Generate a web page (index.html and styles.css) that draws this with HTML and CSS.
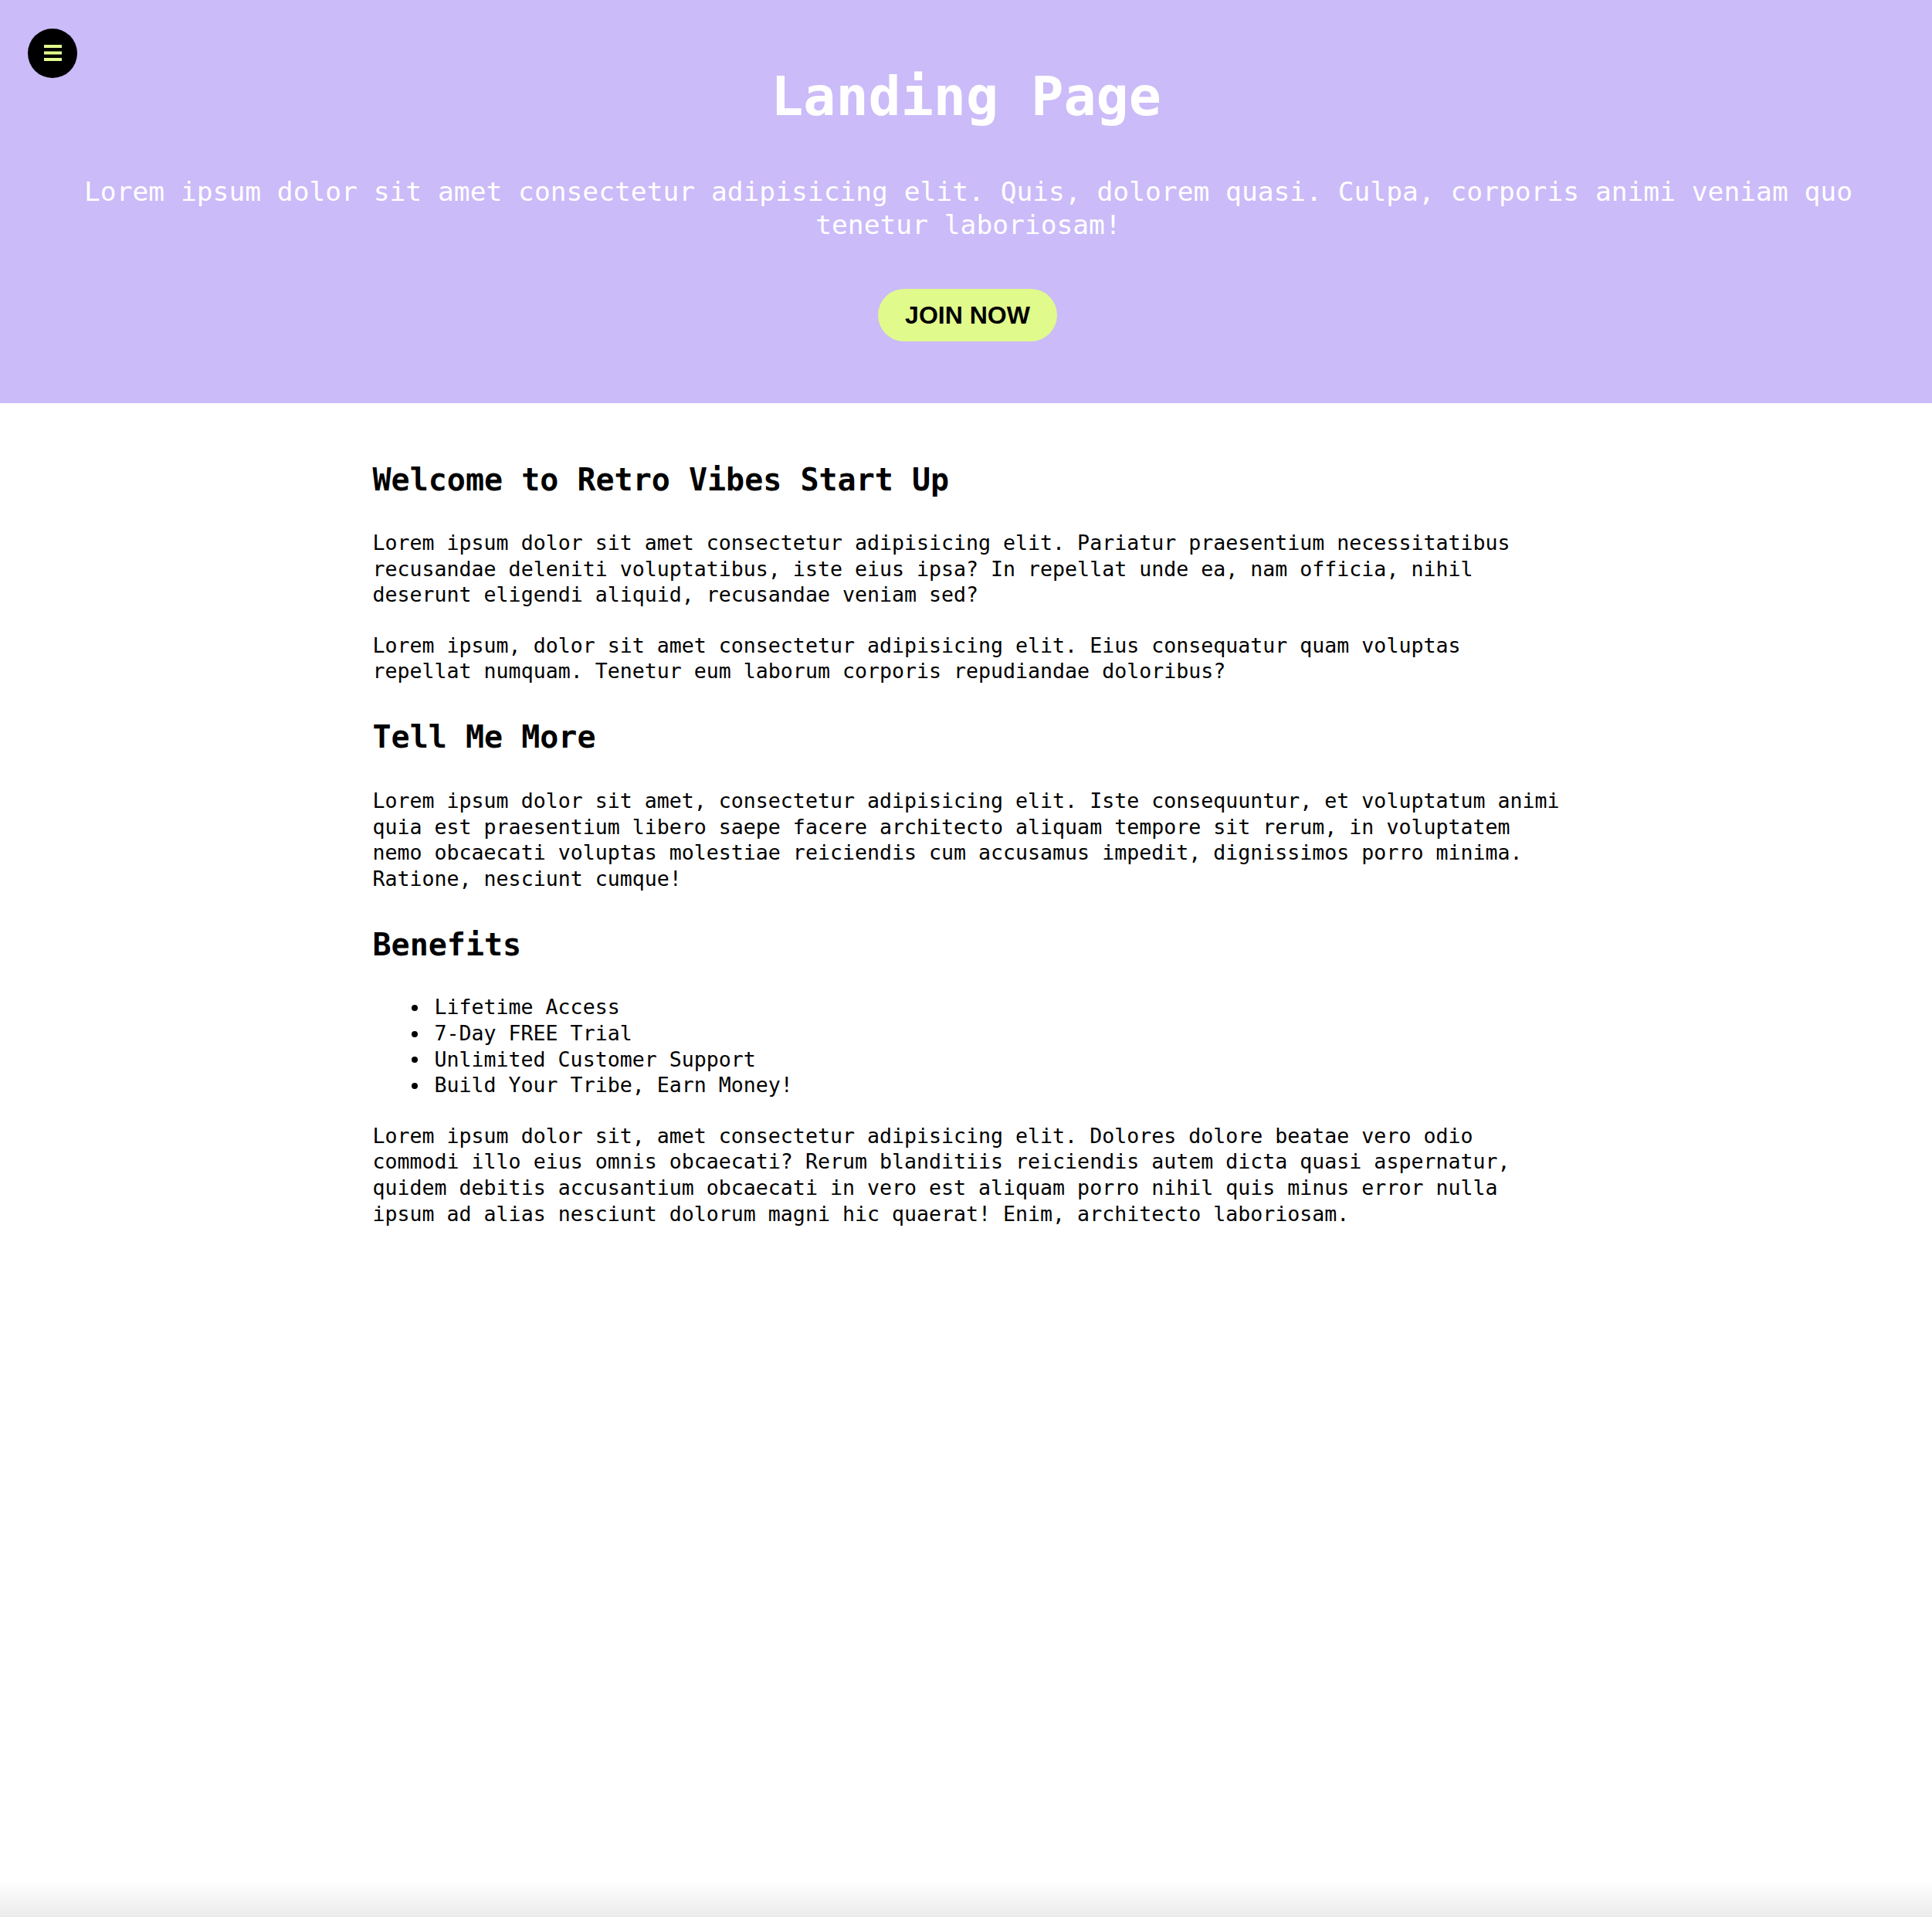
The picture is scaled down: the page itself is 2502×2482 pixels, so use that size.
FILE: index.html
```html
<!DOCTYPE html>
<html lang="en">
<head>
<meta charset="utf-8">
<title>Landing Page</title>
<link rel="stylesheet" href="styles.css">
</head>
<body>
<button class="menu-btn" aria-label="Menu">
  <svg class="menu-icon" viewBox="0 0 23 21" width="23" height="21" aria-hidden="true">
    <rect x="0" y="0" width="23" height="4" fill="#e1fa8c"/>
    <rect x="0" y="8.5" width="23" height="4" fill="#e1fa8c"/>
    <rect x="0" y="17" width="23" height="4" fill="#e1fa8c"/>
  </svg>
</button>

<header class="hero">
  <h1 class="hero-title">Landing Page</h1>
  <p class="hero-sub">Lorem ipsum dolor sit amet consectetur adipisicing elit. Quis, dolorem quasi. Culpa, corporis animi veniam quo tenetur laboriosam!</p>
  <div class="hero-cta"><a class="btn" href="#">JOIN NOW</a></div>
</header>

<main class="content">
  <h2 class="section-title">Welcome to Retro Vibes Start Up</h2>
  <p class="text">Lorem ipsum dolor sit amet consectetur adipisicing elit. Pariatur praesentium necessitatibus recusandae deleniti voluptatibus, iste eius ipsa? In repellat unde ea, nam officia, nihil deserunt eligendi aliquid, recusandae veniam sed?</p>
  <p class="text">Lorem ipsum, dolor sit amet consectetur adipisicing elit. Eius consequatur quam voluptas repellat numquam. Tenetur eum laborum corporis repudiandae doloribus?</p>

  <h2 class="section-title">Tell Me More</h2>
  <p class="text">Lorem ipsum dolor sit amet, consectetur adipisicing elit. Iste consequuntur, et voluptatum animi quia est praesentium libero saepe facere architecto aliquam tempore sit rerum, in voluptatem nemo obcaecati voluptas molestiae reiciendis cum accusamus impedit, dignissimos porro minima. Ratione, nesciunt cumque!</p>

  <h2 class="section-title section-title--list">Benefits</h2>
  <ul class="benefits">
    <li>Lifetime Access</li>
    <li>7-Day FREE Trial</li>
    <li>Unlimited Customer Support</li>
    <li>Build Your Tribe, Earn Money!</li>
  </ul>
  <p class="text">Lorem ipsum dolor sit, amet consectetur adipisicing elit. Dolores dolore beatae vero odio commodi illo eius omnis obcaecati? Rerum blanditiis reiciendis autem dicta quasi aspernatur, quidem debitis accusantium obcaecati in vero est aliquam porro nihil quis minus error nulla ipsum ad alias nesciunt dolorum magni hic quaerat! Enim, architecto laboriosam.</p>
</main>

<div class="bottom-fade" aria-hidden="true"></div>
</body>
</html>
```

FILE: styles.css
```css
html, body {
  margin: 0;
  padding: 0;
  background: #ffffff;
}

body {
  font-family: "DejaVu Sans Mono", "Liberation Mono", monospace;
  font-size: 26.6px;
  line-height: 33.6px;
  color: #000000;
  min-height: 100vh;
}

/* Floating menu button */
.menu-btn {
  position: absolute;
  left: 36px;
  top: 37px;
  width: 64px;
  height: 64px;
  border-radius: 50%;
  background: #000000;
  border: 0;
  padding: 0;
  display: flex;
  align-items: center;
  justify-content: center;
  cursor: pointer;
}

.menu-icon {
  display: block;
  margin-top: -1px;
}

/* Hero */
.hero {
  background: #cbbbf8;
  text-align: center;
  padding: 83px 60px 80px;
  color: #ffffff;
}

.hero-title {
  margin: 0;
  font-size: 70px;
  line-height: 84px;
  font-weight: bold;
  color: #ffffff;
}

.hero-sub {
  margin: 59.5px 0 0;
  padding-left: 6px;
  font-size: 34.6px;
  line-height: 43px;
  color: #ffffff;
}

.hero-cta {
  display: flex;
  justify-content: center;
  margin-top: 61.5px;
  padding-left: 4px;
}

.btn {
  display: block;
  height: 68px;
  padding: 0 35px;
  border-radius: 34px;
  background: #e1fa8c;
  color: #000000;
  text-decoration: none;
  font-family: "Liberation Sans", Arial, sans-serif;
  font-weight: bold;
  font-size: 32px;
  line-height: 68px;
}

/* Content */
.content {
  max-width: 1540px;
  margin: 0 auto;
  padding: 30px 0 0 3px;
}

.section-title {
  margin: 44.5px 0 41.5px;
  font-size: 40px;
  line-height: 48px;
  font-weight: bold;
}

.section-title--list {
  margin-bottom: 40.5px;
}

.text {
  margin: 32px 0;
}

.benefits {
  margin: 0 0 32px;
  padding-left: 80px;
  list-style: none;
}

.benefits li {
  display: flex;
  align-items: center;
}

.benefits li::before {
  content: "";
  flex: none;
  width: 8px;
  height: 8px;
  border-radius: 50%;
  background: #000000;
  margin-left: -30px;
  margin-right: 22px;
  transform: translateY(1px);
}

/* Bottom shade */
.bottom-fade {
  position: fixed;
  left: 0;
  right: 0;
  bottom: 0;
  height: 46px;
  background: linear-gradient(to bottom, rgba(0, 0, 0, 0), rgba(0, 0, 0, 0.08));
  pointer-events: none;
}
```
